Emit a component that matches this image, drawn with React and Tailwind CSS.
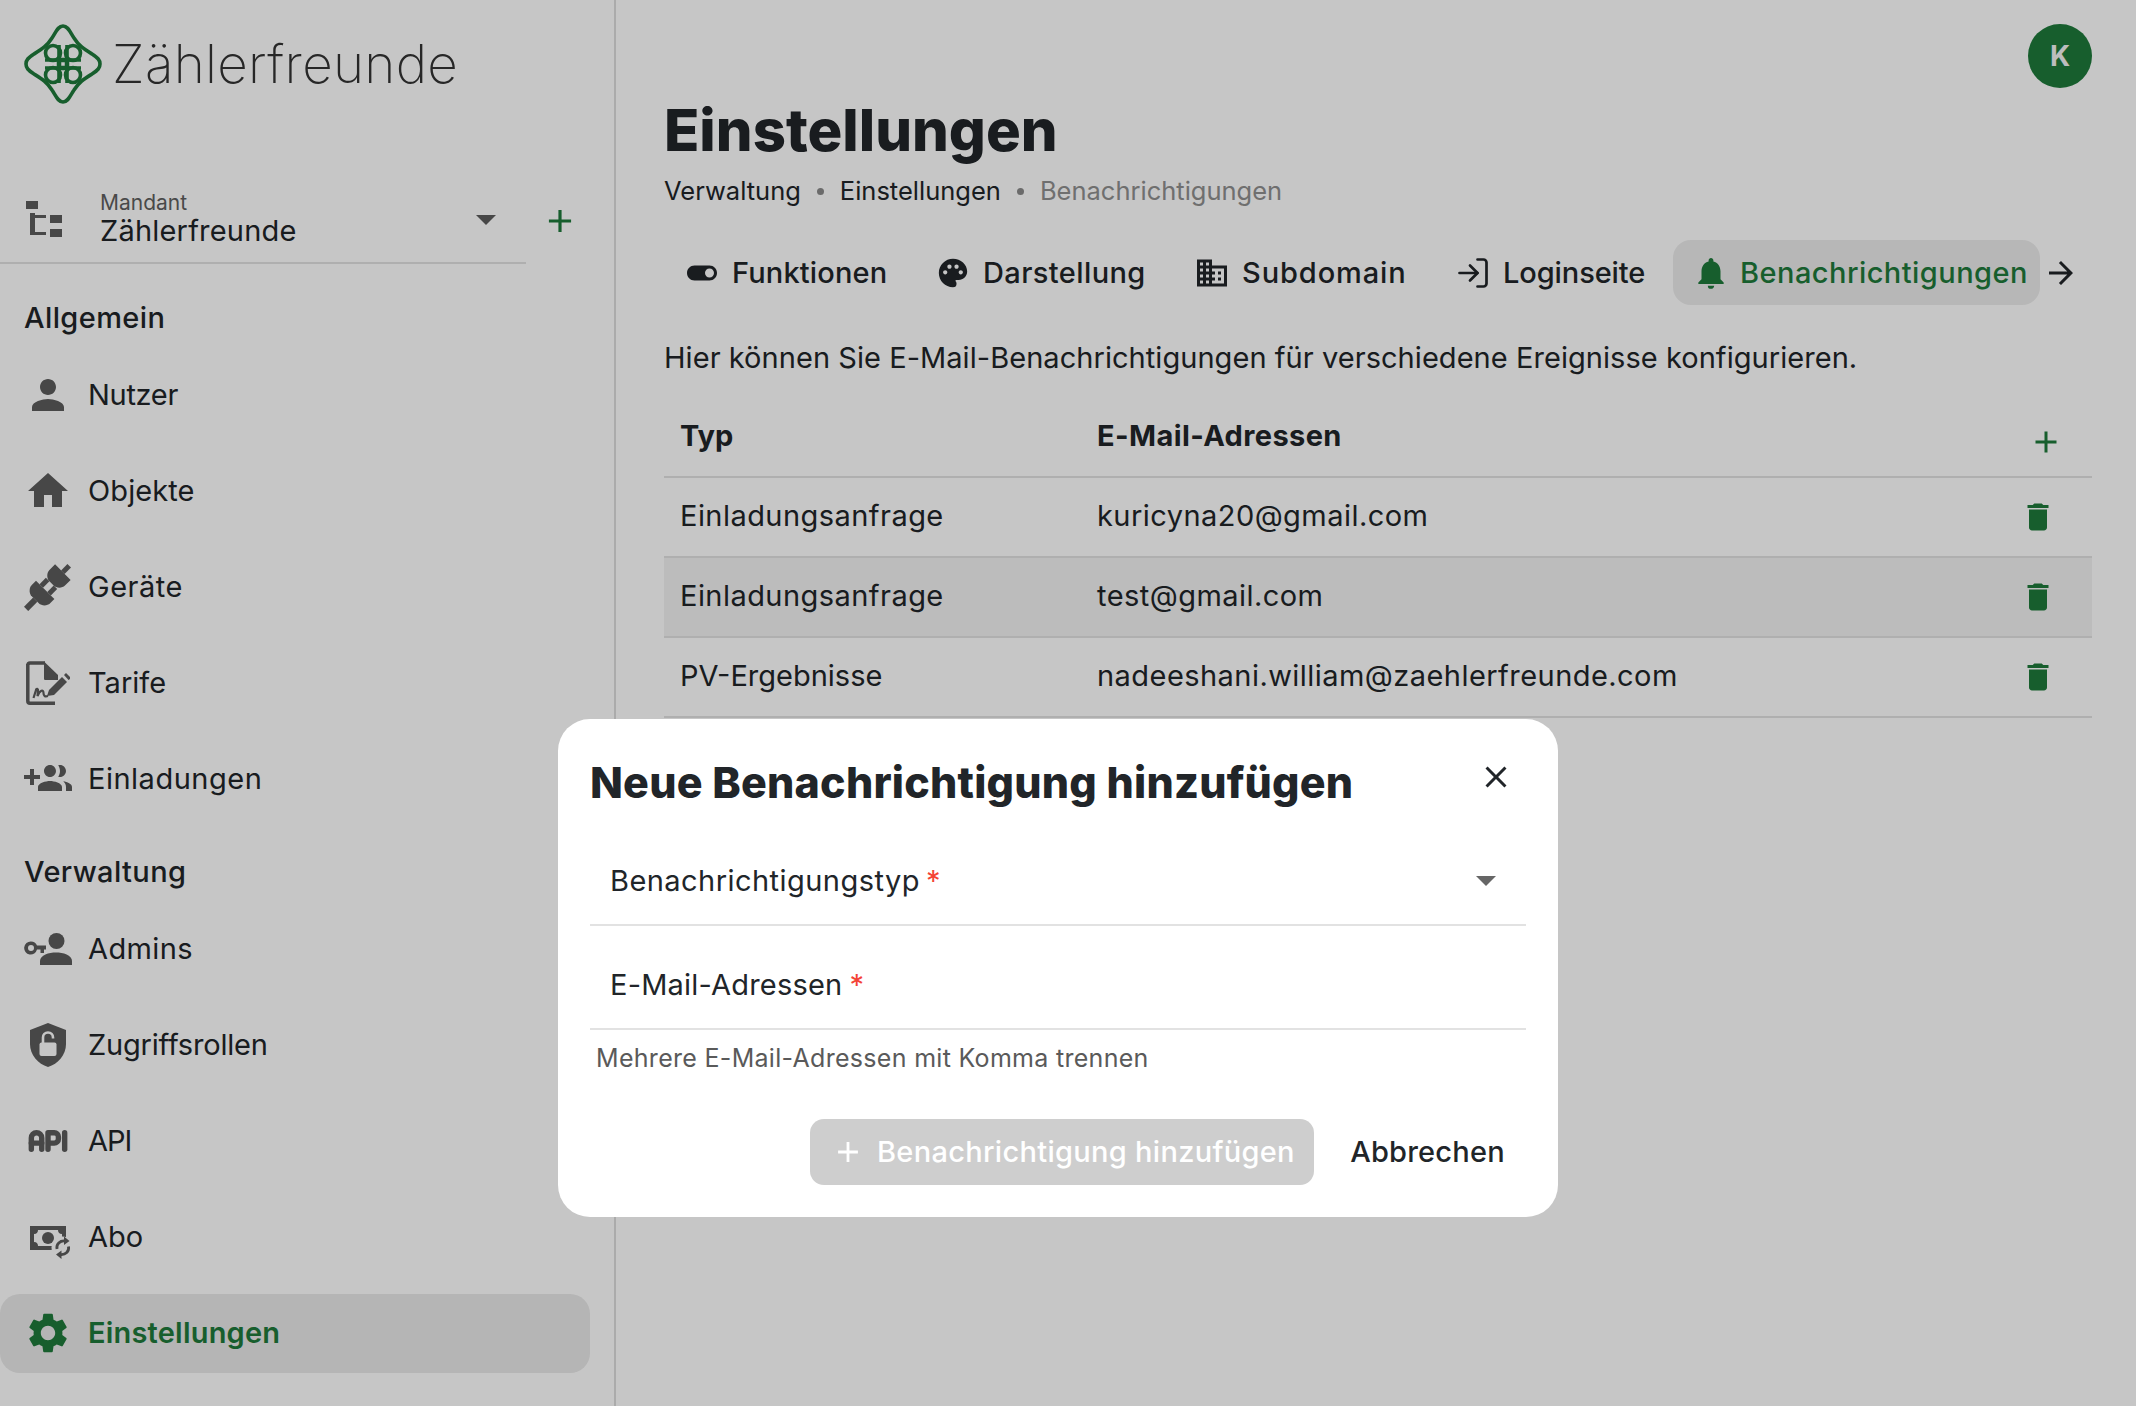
import React from "react";
import {
  MdPerson, MdHome, MdSettings, MdToggleOn, MdPalette, MdDomain,
  MdNotifications, MdArrowForward, MdDelete, MdAdd, MdClose, MdArrowDropDown,
} from "react-icons/md";
import { TbApi } from "react-icons/tb";
import { LuLogIn } from "react-icons/lu";

const Logo = () => (
  <svg width="78" height="80" viewBox="0 0 78 80" fill="none" stroke="#1e7a3b" strokeWidth="3.6" className="shrink-0">
    <path d="M39 2C44 2 46 8 50 14C55 22 60 25 68 30C74 34 76 36 76 40C76 44 74 46 68 50C60 55 55 58 50 66C46 72 44 78 39 78C34 78 32 72 28 66C23 58 18 55 10 50C4 46 2 44 2 40C2 36 4 34 10 30C18 25 23 22 28 14C32 8 34 2 39 2Z" />
    <circle cx="29" cy="29" r="7.500" />
    <circle cx="49" cy="29" r="7.500" />
    <circle cx="29" cy="51" r="7.500" />
    <circle cx="49" cy="51" r="7.500" />
    <path d="M21 36H57M21 44H57M35 21V59M43 21V59" />
    <path d="M35 36H43V44H35Z" strokeWidth="4.500" />
  </svg>
);

const TreeIcon = () => (
  <svg width="36" height="36" viewBox="0 0 36 36" fill="#5c5c5c" className="shrink-0">
    <rect x="0" y="0" width="12" height="8" />
    <path d="M4 12H9V14H20V17H9V31H20V34H4Z" />
    <rect x="24" y="14" width="12" height="8" />
    <rect x="24" y="28" width="12" height="8" />
  </svg>
);

const PlugIcon = ({ size = 48 }) => (
  <svg width={size} height={size} viewBox="0 0 48 48" fill="#5c5c5c">
    <g transform="rotate(45 24 24)">
      <rect x="21.5" y="-6" width="5" height="9" />
      <path d="M13 3H35V11C35 15 31 19 27 19H21C17 19 13 15 13 11Z" />
      <rect x="16" y="19" width="5" height="9" />
      <rect x="27" y="19" width="5" height="9" />
      <path d="M11 28H37V34C37 38 33 42 29 42H19C15 42 11 38 11 34Z" />
      <rect x="21" y="42" width="6" height="13" />
    </g>
  </svg>
);

const TarifIcon = ({ size = 48 }) => (
  <svg width={size} height={size} viewBox="0 0 48 48" fill="none">
    <path d="M4 6C4 4.800 4.800 4 6 4H21" stroke="#5c5c5c" strokeWidth="3.500" />
    <path d="M20 2.500L34 16V21H21C20 21 20 20 20 19Z" fill="#5c5c5c" />
    <path d="M3.800 5V42C3.800 43.500 5 44.200 6 44.200H31" stroke="#5c5c5c" strokeWidth="3.500" />
    <path d="M9.500 39L12 31C12 29 14.500 29.500 14 32L13.500 37C16 31 19.500 30 19.500 34C19.500 37 21 38 24 37" stroke="#5c5c5c" strokeWidth="2.200" />
    <path d="M23 37L25 31L38 18L43 23L30 36Z" fill="#5c5c5c" />
    <path d="M40 16L42 14L46 18L46 20L44.500 21Z" fill="#5c5c5c" />
  </svg>
);

const GroupAddIcon = () => (
  <svg width="48" height="48" viewBox="0 0 24 24" fill="#5c5c5c">
    <path d="M8 10H5V7H3v3H0v2h3v3h2v-3h3v-2zm10 1c1.660 0 2.990-1.340 2.990-3S19.660 5 18 5c-.32 0-.63.05-.91.14.57.81.9 1.790.9 2.860s-.34 2.040-.9 2.860c.28.09.59.14.91.14zm-5 0c1.660 0 2.990-1.340 2.990-3S14.660 5 13 5s-3 1.340-3 3 1.340 3 3 3zm6.620 2.160c.83.73 1.380 1.660 1.380 2.840v2h3v-2c0-1.540-2.370-2.490-4.380-2.840zM13 13c-2 0-6 1-6 3v2h12v-2c0-2-4-3-6-3z" />
  </svg>
);

const AdminIcon = () => (
  <svg width="48" height="48" viewBox="0 0 48 48" fill="#5c5c5c">
    <circle cx="32.500" cy="16" r="8" />
    <path d="M16 40V36C16 30 25 27.500 32 27.500C39 27.500 48 30 48 36V40Z" />
    <path fillRule="evenodd" d="M7 16.500A6.500 6.500 0 0 1 13 20.500H22V24.500H20V28H16.500V24.500H13A6.500 6.500 0 1 1 7 16.500ZM7 20A3 3 0 1 0 7 26A3 3 0 0 0 7 20Z" />
  </svg>
);

const ShieldIcon = () => (
  <svg width="48" height="48" viewBox="0 0 48 48">
    <path d="M24 2L42 9V23C42 34 34 43 24 46C14 43 6 34 6 23V9Z" fill="#5c5c5c" />
    <rect x="15.500" y="21.500" width="17" height="13.500" rx="2" fill="#fff" />
    <path d="M19 22V16.500C19 13.500 21 11.500 24 11.500C27 11.500 29 13.500 29 16.500V17.500" stroke="#fff" strokeWidth="2.600" fill="none" />
  </svg>
);

const AboIcon = () => (
  <svg width="48" height="48" viewBox="0 0 48 48" fill="none">
    <path fillRule="evenodd" d="M6 13H42V37H6ZM10 21V29C13 29 14 31 14 33H34C34 31 35 29 38 29V21C35 21 34 19 34 17H14C14 19 13 21 10 21Z" fill="#5c5c5c" />
    <circle cx="24" cy="25" r="6" fill="#5c5c5c" />
    <circle cx="38.500" cy="34.500" r="11" fill="#fff" />
    <path d="M33 36C32 31 36 27.500 41 28" stroke="#5c5c5c" strokeWidth="2.800" />
    <path d="M40 23.500L45.500 28L40 32Z" fill="#5c5c5c" />
    <path d="M44.500 33.500C45.500 38.500 41.500 42 36.500 41.500" stroke="#5c5c5c" strokeWidth="2.800" />
    <path d="M37.500 37.500L32 41.500L37.500 46Z" fill="#5c5c5c" />
  </svg>
);

const nav1 = [
  ["Nutzer", <MdPerson size={48} color="#5c5c5c" />, "tracking-[-0.3px]"],
  ["Objekte", <MdHome size={48} color="#5c5c5c" />, "tracking-[0.1px]"],
  ["Geräte", <PlugIcon />, "tracking-[0.5px]"],
  ["Tarife", <TarifIcon />, ""],
  ["Einladungen", <GroupAddIcon />, "tracking-[0.5px]"],
];
const nav2 = [
  ["Admins", <AdminIcon />, "tracking-[0.4px]"],
  ["Zugriffsrollen", <ShieldIcon />, "tracking-[-0.2px]"],
  ["API", <TbApi size={50} color="#5c5c5c" strokeWidth={2.6} className="shrink-0" />, "tracking-[-1px]"],
  ["Abo", <AboIcon />, ""],
];

function NavItem({ label, icon, active, tracking = "" }) {
  return (
    <div className="h-24 w-[590px] py-[8.5px]">
      <div className={"flex h-full items-center gap-4 rounded-[20px] pl-6 " + (active ? "bg-[#e9e9e9]" : "")}>
        <span className="flex h-12 w-12 shrink-0 items-center justify-center">{icon}</span>
        <span className={"text-[29px] " + tracking + " " + (active ? "font-semibold text-[#1e7a3b]" : "text-[#212529]")}>{label}</span>
      </div>
    </div>
  );
}

const tabs = [
  ["Funktionen", <MdToggleOn size={36} />, "w-[251px]", "tracking-[0.15px]"],
  ["Darstellung", <MdPalette size={34} />, "w-[259px]", "tracking-[0.4px]"],
  ["Subdomain", <MdDomain size={36} />, "w-[261px]", "tracking-[0.9px]"],
  ["Loginseite", <LuLogIn size={36} strokeWidth={1.8} className="shrink-0" />, "w-[236px]", "tracking-[-0.1px]"],
];

const rows = [
  ["Einladungsanfrage", "kuricyna20@gmail.com", false, "tracking-[0.45px]"],
  ["Einladungsanfrage", "test@gmail.com", true, "tracking-[0.45px]"],
  ["PV-Ergebnisse", "nadeeshani.william@zaehlerfreunde.com", false, ""],
];

export default function App() {
  return (
    <div className="relative flex h-[1406px] w-full overflow-hidden bg-white font-['Inter','Noto_Sans',sans-serif] text-[#212529]">
      <aside className="w-[616px] shrink-0 border-r-2 border-[#dcdcdc]">
        <div className="flex items-center gap-[10px] pl-6 pt-6">
          <Logo />
          <span className="text-[53px] font-extralight leading-[80px] text-[#333] tracking-[0.3px]">Zählerfreunde</span>
        </div>
        <div className="mt-[66px] flex items-center">
          <div className="flex h-[94px] w-[526px] items-center border-b-2 border-[#e2e2e2] pl-[26px] pt-[6px]">
            <TreeIcon />
            <div className="ml-[38px] flex-1">
              <div className="text-[21px] leading-[24px] text-[#5f5f5f]">Mandant</div>
              <div className="text-[29px] leading-[32px] tracking-[0.2px]">Zählerfreunde</div>
            </div>
            <MdArrowDropDown size={48} color="#5c5c5c" className="mr-[16px]" />
          </div>
          <MdAdd size={38} color="#1e7a3b" className="ml-[15px] mt-[8px]" />
        </div>
        <div className="mt-[34px] h-10 pl-6 text-[29px] font-medium leading-10 tracking-[0.4px]">Allgemein</div>
        <div className="mt-[9px]">
          {nav1.map(([l, i, t]) => <NavItem key={l} label={l} icon={i} tracking={t} />)}
        </div>
        <div className="mt-[25px] h-10 pl-6 text-[29px] font-medium leading-10 tracking-[0.4px]">Verwaltung</div>
        <div className="mt-[9px]">
          {nav2.map(([l, i, t]) => <NavItem key={l} label={l} icon={i} tracking={t} />)}
          <NavItem label="Einstellungen" icon={<MdSettings size={48} color="#1e7a3b" />} tracking="tracking-[0.2px]" active />
        </div>
      </aside>

      <main className="min-w-0 flex-1 pl-12 pr-11">
        <div className="flex justify-end pt-6">
          <div className="flex h-16 w-16 items-center justify-center rounded-full bg-[#1e7a3b] text-[28px] font-bold text-[#f4f4f4]">K</div>
        </div>
        <h1 className="mt-3 text-[58px] font-extrabold leading-[60px]">Einstellungen</h1>
        <div className="mt-[15px] flex h-8 items-center text-[25.500px] leading-8">
          <span>Verwaltung</span>
          <span className="mx-4 h-[7px] w-[7px] rounded-full bg-[#8a8a8a]"></span>
          <span>Einstellungen</span>
          <span className="mx-4 h-[7px] w-[7px] rounded-full bg-[#8a8a8a]"></span>
          <span className="text-[#8f8f8f]">Benachrichtigungen</span>
        </div>
        <div className="ml-[2px] mt-[33px] flex h-[65px] items-center">
          {tabs.map(([l, i, w, t]) => (
            <div key={l} className={"flex h-full items-center gap-3 pl-[18px] text-[29px] font-medium " + w}>
              <span className="flex h-9 w-9 shrink-0 items-center justify-center">{i}</span>
              <span className={t}>{l}</span>
            </div>
          ))}
          <div className="relative flex h-full w-[367px] items-center gap-[10px] rounded-[18px] bg-[#ececec] pl-[19px] text-[29px] font-medium tracking-[0.45px] text-[#1e7a3b]">
            <MdNotifications size={38} className="shrink-0" />
            <span>Benachrichtigungen</span>
          </div>
          <MdArrowForward size={36} className="ml-[3px]" />
        </div>
        <p className="mt-[33px] h-10 text-[29px] leading-10 tracking-[0.05px]">Hier können Sie E-Mail-Benachrichtigungen für verschiedene Ereignisse konfigurieren.</p>
        <div className="mt-[18px]">
          <div className="flex h-[82px] items-center border-b-2 border-[#e2e2e2] pl-4 text-[29px] font-bold">
            <div className="w-[417px]">Typ</div>
            <div className="flex-1 tracking-[0.4px]">E-Mail-Adressen</div>
            <MdAdd size={36} color="#1e7a3b" className="mr-7 mt-3" />
          </div>
          {rows.map(([a, b, hover, t], i) => (
            <div key={i} className={"flex h-[80px] items-center border-b-2 border-[#e2e2e2] pl-4 text-[29px] " + (hover ? "bg-[#f2f2f2]" : "")}>
              <div className={"w-[417px] pb-[2px] " + t}>{a}</div>
              <div className="flex-1 pb-[2px] tracking-[0.45px]">{b}</div>
              <MdDelete size={36} color="#1e7a3b" className="mr-9" />
            </div>
          ))}
        </div>
      </main>

      <div className="absolute inset-0 bg-[#000000]/[0.224]"></div>

      <div className="absolute left-[558px] top-[719px] h-[498px] w-[1000px] rounded-[32px] bg-white px-8 pt-[38px]">
        <h2 className="h-[50px] text-[43px] font-extrabold leading-[50px] tracking-[0.2px]">Neue Benachrichtigung hinzufügen</h2>
        <MdClose size={36} className="absolute left-[920px] top-10" />
        <div className="mt-[29px] flex h-[90px] w-[936px] items-center border-b-2 border-[#e2e2e2] pl-5 pt-[2px] text-[29px]">
          <span className="tracking-[0.45px]">Benachrichtigungstyp</span>
          <span className="ml-[6px] text-[#f44336]">*</span>
          <MdArrowDropDown size={48} color="#666" className="ml-auto mr-4 -mt-[2px]" />
        </div>
        <div className="mt-[14px] flex h-[90px] w-[936px] items-center border-b-2 border-[#e2e2e2] pl-5 pt-[2px] text-[29px]">
          <span className="tracking-[0.2px]">E-Mail-Adressen</span>
          <span className="ml-[7px] text-[#f44336]">*</span>
        </div>
        <div className="mt-[13px] h-[30px] pl-[6px] text-[25px] leading-[30px] tracking-[0.3px] text-[#5a5a5a]">Mehrere E-Mail-Adressen mit Komma trennen</div>
        <div className="mt-[46px] flex w-[936px] justify-end gap-[15px]">
          <div className="flex h-[66px] w-[504px] items-center gap-[12px] rounded-[14px] bg-[#cecece] pl-[21px] text-[29px] font-medium tracking-[0.3px] text-white">
            <MdAdd size={34} className="shrink-0" />
            <span>Benachrichtigung hinzufügen</span>
          </div>
          <div className="flex h-[66px] w-[197px] items-center justify-center text-[29px] font-medium tracking-[0.2px]">Abbrechen</div>
        </div>
      </div>
    </div>
  );
}
